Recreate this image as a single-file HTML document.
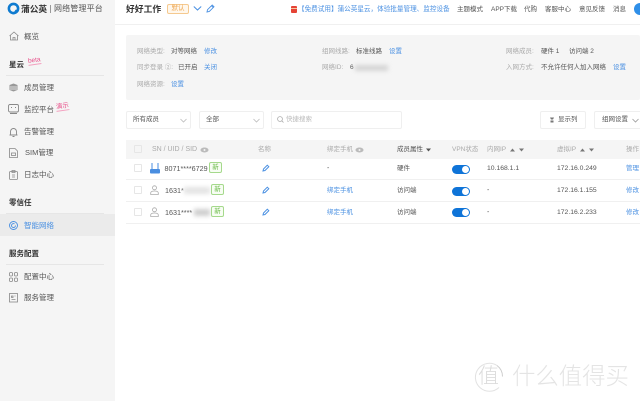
<!DOCTYPE html>
<html lang="zh"><head><meta charset="utf-8"><title>蒲公英</title>
<style>
html,body{margin:0;padding:0;width:640px;height:401px;overflow:hidden;background:#fff}
body{position:relative;font-family:"Liberation Sans","Noto Sans CJK SC",sans-serif;font-size:7.5px;color:#555}
#w{position:absolute;left:0;top:0;width:640px;height:401px;filter:blur(.25px)}
.a,.t,svg.i{position:absolute}
.t{white-space:nowrap;line-height:10px;height:10px;transform:translateY(-5px)}
.g{color:#aaa}.b{color:#4a90e2}.d{color:#444}
.h{font-weight:700;color:#333;font-size:7.5px}
.box{position:absolute;background:#fff;border:1px solid #efefef;border-radius:2px;box-sizing:border-box}
.cb{position:absolute;left:134px;width:8px;height:8px;border:1px solid #e6e6e6;border-radius:1px;background:#fff;box-sizing:border-box}
.tog{position:absolute;left:452px;width:18px;height:9px;border-radius:4.5px;background:#0f74d8}
.tog:after{content:"";position:absolute;right:1px;top:1px;width:7px;height:7px;border-radius:50%;background:#fff}
.new{position:absolute;width:13px;height:11px;border:1px solid #a5d98c;border-radius:2px;box-sizing:border-box;background:#f7fdf3;color:#6cbb4a;font-size:6.5px;line-height:9px;text-align:center}
.blur{position:absolute;background:#cfcfcf;filter:blur(2px)}
.line{position:absolute;height:1px;background:#e6e6e6}
.rot{position:absolute;color:#e8508a;font-size:6.5px;transform:rotate(-8deg);white-space:nowrap;line-height:7px;border-bottom:1px solid #f3a0bf}
</style></head><body><div id="w">

<div class="a" style="left:0;top:0;width:115px;height:401px;background:#f5f5f5"></div>
<div class="a" style="left:115px;top:0;width:525px;height:25px;border-bottom:1px solid #f0f0f0;box-sizing:border-box"></div>

<svg class="i" style="left:7px;top:2px" width="13" height="13" viewBox="0 0 13 13"><circle cx="6.5" cy="6.5" r="4.6" fill="none" stroke="#0f7bd0" stroke-width="2.6"/><path d="M5.5 12.5a6 6 0 0 0 6-5l-3 .3z" fill="#0f7bd0"/></svg>
<span class="t" style="left:21px;top:9px;font-size:8.7px;font-weight:700;color:#333">蒲公英</span>
<div class="a" style="left:50px;top:5px;width:1px;height:8px;background:#999"></div>
<span class="t" style="left:54px;top:9px;font-size:8px;letter-spacing:.15px;color:#555">网络管理平台</span>

<svg class="i" style="left:9px;top:31px" width="10" height="10" viewBox="0 0 10 10" fill="none" stroke="#888" stroke-width=".8"><path d="M.5 5 5 1l4.500 4M1.500 4.500V9h7V4.500M4 9V6.500h2V9"/></svg>
<span class="t" style="left:24px;top:37px">概览</span>

<span class="t h" style="left:9px;top:65px">星云</span>
<span class="rot" style="left:28px;top:57px">beta</span>
<div class="line" style="left:6px;top:75px;width:98px"></div>

<svg class="i" style="left:9px;top:83px" width="9" height="9" viewBox="0 0 9 9"><path d="M4.500.5 8.500 2v5l-4 1.500L.5 7V2z" fill="#999"/><path d="M1 4h7M1 6h7" stroke="#f5f5f5" stroke-width=".7"/></svg>
<span class="t" style="left:24px;top:88px">成员管理</span>

<svg class="i" style="left:8px;top:104px" width="11" height="10" viewBox="0 0 11 10" fill="none" stroke="#888" stroke-width=".9"><rect x=".5" y=".5" width="10" height="7.500" rx="1.500"/><path d="M3 3.500h1M7 3.500h1M2 9.500h7"/></svg>
<span class="t" style="left:24px;top:110px">监控平台</span>
<span class="rot" style="left:56px;top:103px">演示</span>

<svg class="i" style="left:9px;top:127px" width="9" height="10" viewBox="0 0 9 10" fill="none" stroke="#888" stroke-width=".9"><path d="M1.500 8V4.500a3 3 0 0 1 6 0V8zM.5 8h8M3.500 9.500h2"/></svg>
<span class="t" style="left:24px;top:132px">告警管理</span>

<svg class="i" style="left:9px;top:148px" width="9" height="10" viewBox="0 0 9 10" fill="none" stroke="#888" stroke-width=".8"><path d="M.5.500h5.500l2.500 2.500v6.500h-8z"/><rect x="2.500" y="5" width="4" height="2.500"/></svg>
<span class="t" style="left:25px;top:153px">SIM管理</span>

<svg class="i" style="left:9px;top:170px" width="9" height="10" viewBox="0 0 9 10" fill="none" stroke="#888" stroke-width=".8"><rect x=".5" y="1.500" width="8" height="8" rx="1"/><path d="M3 .5h3v2H3zM3 5h3M3 7h3"/></svg>
<span class="t" style="left:24px;top:175px">日志中心</span>

<span class="t h" style="left:9px;top:203px">零信任</span>
<div class="line" style="left:6px;top:213px;width:98px"></div>
<div class="a" style="left:0;top:214px;width:115px;height:22px;background:#ebebeb"></div>
<svg class="i" style="left:9px;top:221px" width="9" height="9" viewBox="0 0 9 9" fill="none" stroke="#4a90e2" stroke-width=".9"><circle cx="4.500" cy="4.500" r="4"/><path d="M6.500 4.500a2 2 0 1 1-1-1.700"/></svg>
<span class="t b" style="left:24px;top:226px">智能网络</span>

<span class="t h" style="left:9px;top:254px">服务配置</span>
<div class="line" style="left:6px;top:264px;width:98px"></div>
<svg class="i" style="left:9px;top:272px" width="9" height="10" viewBox="0 0 9 10" fill="none" stroke="#888" stroke-width=".8"><rect x=".5" y=".5" width="3" height="3.500" rx="1"/><rect x="5.500" y=".5" width="3" height="3.500" rx="1"/><rect x=".5" y="6" width="3" height="3.500" rx="1"/><rect x="5.500" y="6" width="3" height="3.500" rx="1"/></svg>
<span class="t" style="left:24px;top:277px">配置中心</span>
<svg class="i" style="left:9px;top:293px" width="9" height="10" viewBox="0 0 9 10" fill="none" stroke="#888" stroke-width=".8"><rect x=".5" y=".5" width="8" height="8.500"/><path d="M2.500 3h1.500v1.500H2.500zM5.500 3h1M2.500 6.500h4"/></svg>
<span class="t" style="left:24px;top:298px">服务管理</span>

<span class="t" style="left:126px;top:9px;font-size:8.800px;font-weight:700;color:#333">好好工作</span>
<div class="a" style="left:167px;top:4px;width:22px;height:10px;border:1px solid #f5c98f;border-radius:2px;box-sizing:border-box;background:#fff7ec;color:#eea64f;font-size:6.500px;line-height:8px;text-align:center">默认</div>
<svg class="i" style="left:193px;top:5px" width="9" height="7" viewBox="0 0 9 7" fill="none" stroke="#4a90e2"><path d="M.8 1.500 4.500 5l3.700-3.500"/></svg>
<svg class="i" style="left:206px;top:4px" width="9" height="9" viewBox="0 0 9 9" fill="none" stroke="#4a90e2" stroke-width=".9"><path d="M1 8l.5-2.300L6.200 1 8 2.800 3.300 7.500zM5.500 1.800l1.700 1.700"/></svg>

<div class="a" style="left:291px;top:6px;width:6px;height:7px;background:#e54335;border-radius:1px"></div>
<div class="a" style="left:291px;top:8px;width:6px;height:1px;background:#f8c6a0"></div>
<span class="t b" style="left:298px;top:9.500px;font-size:6.600px">【免费试用】蒲公英星云，体验批量管理、监控设备</span>
<span class="t" style="left:457px;top:9.500px;font-size:6.500px">主题模式</span>
<span class="t" style="left:491px;top:9.500px;font-size:6.500px">APP下载</span>
<span class="t" style="left:524px;top:9.500px;font-size:6.500px">代购</span>
<span class="t" style="left:545px;top:9.500px;font-size:6.500px">客服中心</span>
<span class="t" style="left:579px;top:9.500px;font-size:6.500px">意见反馈</span>
<span class="t" style="left:613px;top:9.500px;font-size:6.500px">消息</span>
<div class="a" style="left:634px;top:3px;width:12px;height:12px;border-radius:50%;background:#2f8fe8"></div>

<div class="a" style="left:126px;top:35px;width:514px;height:65px;background:#f5f5f5;border-radius:2px"></div>
<span class="t g" style="left:137px;top:51.500px;font-size:6.500px">网络类型:</span>
<span class="t" style="left:171px;top:51.500px;font-size:6.500px">对等网络</span>
<span class="t b" style="left:204px;top:51.500px;font-size:6.500px">修改</span>
<span class="t g" style="left:137px;top:68px;font-size:6.500px">同步登录 ②:</span>
<span class="t" style="left:178px;top:68px;font-size:6.500px">已开启</span>
<span class="t b" style="left:204px;top:68px;font-size:6.500px">关闭</span>
<span class="t g" style="left:137px;top:84.500px;font-size:6.500px">网络资源:</span>
<span class="t b" style="left:171px;top:84.500px;font-size:6.500px">设置</span>

<span class="t g" style="left:322px;top:51.500px;font-size:6.500px">组网线路:</span>
<span class="t" style="left:356px;top:51.500px;font-size:6.500px">标准线路</span>
<span class="t b" style="left:389px;top:51.500px;font-size:6.500px">设置</span>
<span class="t g" style="left:322px;top:68px;font-size:6.500px">网络ID:</span>
<span class="t" style="left:350px;top:68px;font-size:6.500px">6</span>
<div class="blur" style="left:355px;top:65px;width:33px;height:6px;background:#d5d5d5"></div>

<span class="t g" style="left:506px;top:51.500px;font-size:6.500px">网络成员:</span>
<span class="t" style="left:541px;top:51.500px;font-size:6.500px">硬件 1</span>
<span class="t" style="left:569px;top:51.500px;font-size:6.500px">访问端 2</span>
<span class="t g" style="left:506px;top:68px;font-size:6.500px">入网方式:</span>
<span class="t" style="left:541px;top:68px;font-size:6.500px">不允许任何人加入网络</span>
<span class="t b" style="left:613px;top:68px;font-size:6.500px">设置</span>

<div class="box" style="left:126px;top:111px;width:65px;height:18px"></div>
<span class="t" style="left:133px;top:120px;font-size:6.500px">所有成员</span>
<svg class="i" style="left:180px;top:118px" width="7" height="5" viewBox="0 0 7 5" fill="none" stroke="#bbb" stroke-width=".8"><path d="M.5 1l3 3 3-3"/></svg>
<div class="box" style="left:199px;top:111px;width:65px;height:18px"></div>
<span class="t" style="left:206px;top:120px;font-size:6.500px">全部</span>
<svg class="i" style="left:253px;top:118px" width="7" height="5" viewBox="0 0 7 5" fill="none" stroke="#bbb" stroke-width=".8"><path d="M.5 1l3 3 3-3"/></svg>
<div class="box" style="left:271px;top:111px;width:131px;height:18px"></div>
<svg class="i" style="left:277px;top:116px" width="7" height="7" viewBox="0 0 7 7" fill="none" stroke="#aaa" stroke-width=".8"><circle cx="3" cy="3" r="2.400"/><path d="M4.800 4.800 6.500 6.500"/></svg>
<span class="t" style="left:286px;top:120px;font-size:6.500px;color:#bbb">快捷搜索</span>
<div class="box" style="left:540px;top:111px;width:46px;height:18px"></div>
<svg class="i" style="left:549px;top:117px" width="6" height="6" viewBox="0 0 6 6" fill="#777"><path d="M1 .5h4L4 2.500H2zM1.500 3.500h3V5.500h-3z"/></svg>
<span class="t" style="left:558px;top:120px;font-size:6.500px">显示列</span>
<div class="box" style="left:594px;top:111px;width:60px;height:18px"></div>
<span class="t" style="left:602px;top:120px;font-size:6.500px">组网设置</span>
<svg class="i" style="left:632px;top:118px" width="7" height="5" viewBox="0 0 7 5" fill="none" stroke="#999" stroke-width=".8"><path d="M.5 1l3 3 3-3"/></svg>

<div class="a" style="left:126px;top:140px;width:514px;height:19px;background:#f5f5f5"></div>
<div class="cb" style="top:145px;background:#f5f5f5"></div>
<span class="t g" style="left:152px;top:149.500px;font-size:7px">SN / UID / SID</span>
<svg class="i" style="left:200px;top:147px" width="9" height="6" viewBox="0 0 9 6"><ellipse cx="4.500" cy="3" rx="4" ry="2.500" fill="#bbb"/><circle cx="4.500" cy="3" r="1" fill="#f5f5f5"/></svg>
<span class="t g" style="left:258px;top:149.500px;font-size:6.500px">名称</span>
<span class="t g" style="left:327px;top:149.500px;font-size:6.500px">绑定手机</span>
<svg class="i" style="left:355px;top:147px" width="9" height="6" viewBox="0 0 9 6"><ellipse cx="4.500" cy="3" rx="4" ry="2.500" fill="#bbb"/><circle cx="4.500" cy="3" r="1" fill="#f5f5f5"/></svg>
<span class="t" style="left:397px;top:149.500px;font-size:6.500px">成员属性</span>
<svg class="i" style="left:426px;top:148px" width="5" height="4" viewBox="0 0 5 4" fill="#555"><path d="M0 .5h5L2.500 3.500z"/></svg>
<span class="t g" style="left:452px;top:149.500px;font-size:6.500px">VPN状态</span>
<span class="t g" style="left:487px;top:149.500px;font-size:6.500px">内网IP</span>
<svg class="i" style="left:510px;top:148px" width="14" height="4" viewBox="0 0 14 4" fill="#777"><path d="M0 3.500h5L2.500.5zM9 .5h5L11.500 3.500z"/></svg>
<span class="t g" style="left:557px;top:149.500px;font-size:6.500px">虚拟IP</span>
<svg class="i" style="left:580px;top:148px" width="14" height="4" viewBox="0 0 14 4" fill="#777"><path d="M0 3.500h5L2.500.5zM9 .5h5L11.500 3.500z"/></svg>
<span class="t g" style="left:626px;top:149.500px;font-size:6.500px">操作</span>

<div class="line" style="left:126px;top:179px;width:514px;background:#f0f0f0"></div>
<div class="line" style="left:126px;top:201px;width:514px;background:#f0f0f0"></div>
<div class="line" style="left:126px;top:223px;width:514px;background:#f0f0f0"></div>

<div class="cb" style="top:164px"></div>
<svg class="i" style="left:150px;top:163px" width="10" height="11" viewBox="0 0 10 11"><path d="M2 0v6M8 0v6" stroke="#4a8ee0" stroke-width="1"/><rect x="0" y="6" width="10" height="4.500" rx="1" fill="#4a8ee0"/></svg>
<span class="t" style="left:164.500px;top:168.500px;font-size:7.200px;color:#555">8071****6729</span>
<div class="new" style="left:209px;top:162px">新</div>
<svg class="i" style="left:262px;top:164px" width="8" height="8" viewBox="0 0 8 8" fill="none" stroke="#4a90e2"><path d="M1 7l.5-2 3.800-3.800 1.500 1.500L3 6.500z"/></svg>
<span class="t" style="left:327px;top:168.500px;font-size:7px">-</span>
<span class="t" style="left:397px;top:168.500px;font-size:6.500px">硬件</span>
<div class="tog" style="top:165px"></div>
<span class="t" style="left:487px;top:168.500px;font-size:6.800px">10.168.1.1</span>
<span class="t" style="left:557px;top:168.500px;font-size:6.800px">172.16.0.249</span>
<span class="t b" style="left:626px;top:168.500px;font-size:6.500px">管理</span>

<div class="cb" style="top:186px"></div>
<svg class="i" style="left:150px;top:185px" width="9" height="10" viewBox="0 0 9 10" fill="none" stroke="#aaa" stroke-width=".8"><circle cx="4.500" cy="2.800" r="2"/><path d="M.7 9.500V8c0-1.200 1.500-2 3.800-2s3.800.8 3.800 2v1.500z"/></svg>
<span class="t" style="left:165px;top:190.500px;font-size:7.200px">1631*</span>
<div class="blur" style="left:184px;top:187px;width:26px;height:7px;background:#e4e4e4"></div>
<div class="new" style="left:211px;top:184px">新</div>
<svg class="i" style="left:262px;top:186px" width="8" height="8" viewBox="0 0 8 8" fill="none" stroke="#4a90e2"><path d="M1 7l.5-2 3.800-3.800 1.500 1.500L3 6.500z"/></svg>
<span class="t b" style="left:327px;top:190.500px;font-size:6.500px">绑定手机</span>
<span class="t" style="left:397px;top:190.500px;font-size:6.500px">访问端</span>
<div class="tog" style="top:186.500px"></div>
<span class="t" style="left:487px;top:190.500px;font-size:7px">-</span>
<span class="t" style="left:557px;top:190.500px;font-size:6.800px">172.16.1.155</span>
<span class="t b" style="left:626px;top:190.500px;font-size:6.500px">修改</span>

<div class="cb" style="top:208px"></div>
<svg class="i" style="left:150px;top:207px" width="9" height="10" viewBox="0 0 9 10" fill="none" stroke="#aaa" stroke-width=".8"><circle cx="4.500" cy="2.800" r="2"/><path d="M.7 9.500V8c0-1.200 1.500-2 3.800-2s3.800.8 3.800 2v1.500z"/></svg>
<span class="t" style="left:165px;top:212.500px;font-size:7.200px">1631****</span>
<div class="blur" style="left:194px;top:209px;width:16px;height:7px"></div>
<div class="new" style="left:211px;top:206px">新</div>
<svg class="i" style="left:262px;top:208px" width="8" height="8" viewBox="0 0 8 8" fill="none" stroke="#4a90e2"><path d="M1 7l.5-2 3.800-3.800 1.500 1.500L3 6.500z"/></svg>
<span class="t b" style="left:327px;top:212.500px;font-size:6.500px">绑定手机</span>
<span class="t" style="left:397px;top:212.500px;font-size:6.500px">访问端</span>
<div class="tog" style="top:208px"></div>
<span class="t" style="left:487px;top:212.500px;font-size:7px">-</span>
<span class="t" style="left:557px;top:212.500px;font-size:6.800px">172.16.2.233</span>
<span class="t b" style="left:626px;top:212.500px;font-size:6.500px">修改</span>

<svg class="i" style="left:473px;top:362px" width="31" height="31" viewBox="0 0 31 31" fill="none" stroke="#e2e2e2"><path d="M24 3.500a14 14 0 1 0 2 22"/><path d="M24 3.500c4 3 5.500 7 5.500 11" stroke="#ccc"/></svg>
<span class="a" style="left:478px;top:363px;font-size:21px;line-height:24px;color:#dcdcdc;font-family:'Noto Sans CJK SC',sans-serif;font-weight:300">值</span>
<span class="a" style="left:512px;top:361px;font-size:23.400px;line-height:26px;color:#e4e4e4;white-space:nowrap;font-family:'Noto Sans CJK SC',sans-serif;font-weight:300">什么值得买</span>

</div></body></html>
